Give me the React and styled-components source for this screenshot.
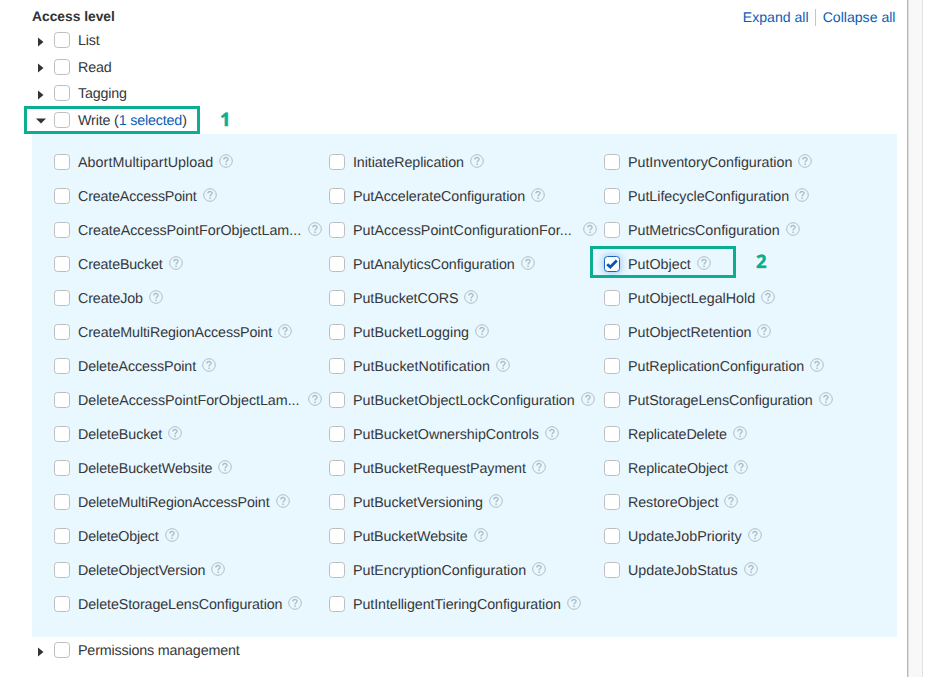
import React from "react";
import styled, { createGlobalStyle, css } from "styled-components";

const GlobalStyle = createGlobalStyle`
  * { box-sizing: border-box; }
  html, body { margin: 0; overflow: hidden; background: #fff; }
  body {
    font-family: "Liberation Sans", Arial, sans-serif;
    font-size: 14.3px;
    line-height: 20px;
    color: #36383a;
    text-rendering: geometricPrecision;
  }
`;

const Page = styled.div`
  display: flex;
  width: 931px;
  height: 677px;
  overflow: hidden;
`;

const Content = styled.main`
  width: 907px;
  padding: 6px 10px 0 32px;
`;

const Gutter = styled.div`
  width: 16px;
  background: #f8f8f8;
  border-left: 1px solid #b8b8b8;
  border-right: 1px solid #e3e3e3;
  box-shadow: inset 1px 0 0 #dedede;
`;

const Header = styled.header`
  display: flex;
  justify-content: space-between;
  height: 21px;
`;

const Title = styled.h1`
  margin: 0;
  font-size: 13.8px;
  line-height: 21px;
  font-weight: bold;
  color: #333;
`;

const Actions = styled.nav`
  display: flex;
  align-items: center;
  margin: 0 1.5px 0 0;
  height: 22px;
`;

const Link = styled.a`
  color: #0a5db5;
  font-size: 14.1px;
`;

const Divider = styled.span`
  width: 1px;
  height: 17px;
  margin: 0 7px 0 6px;
  background: #c4c4c4;
`;

const Level = styled.div`
  position: relative;
  display: flex;
  align-items: center;
  height: 26.6px;
`;

const LevelName = styled.span`
  padding-top: 2px;
  letter-spacing: -0.17px;
`;

const Arrow = styled.svg`
  width: 10px;
  height: 10px;
  margin: ${(p) => (p.$open ? "2px" : "3px")} 8px 0 4px;
  fill: #333;
`;

const Check = styled.span`
  display: flex;
  flex: none;
  align-items: center;
  justify-content: center;
  width: 16px;
  height: 16px;
  margin-right: 8px;
  background: #fff;
  border: 1px solid #bcbec0;
  border-radius: 3.5px;
  ${(p) => p.$checked && css`
    border-color: #1466c0;
    box-shadow: 0 0 7px 1px #9bcbf5;
  `}
`;

const Selected = styled.span`
  color: #0a5db5;
`;

const Panel = styled.div`
  display: grid;
  grid-template-columns: repeat(3, 275px);
  width: 865px;
  height: 503px;
  margin-top: 0.6px;
  padding: 11px 0 16px 22px;
  background: #e9f7ff;
`;

const Item = styled.div`
  position: relative;
  display: flex;
  align-items: center;
  height: 34px;
`;

const Name = styled.span`
  padding-top: 2px;
  white-space: nowrap;
  letter-spacing: ${(p) => p.$tracking}px;
  width: ${(p) => (p.$clipped ? "224px" : "auto")};
`;

const HelpIcon = styled.svg`
  flex: none;
  width: 14px;
  height: 14px;
  margin: -2px 0 0 6px;
`;

const Highlight = styled.span`
  position: absolute;
  border: 3px solid #0bae93;
  pointer-events: none;
  ${(p) => p.$level
    ? css`left: -8px; top: -0.8px; width: 176px; height: 28px; z-index: 1;`
    : css`left: -14px; top: -1px; width: 146px; height: 32px;`}
`;

const Marker = styled.strong`
  position: absolute;
  left: ${(p) => p.$left}px;
  top: ${(p) => p.$top}px;
  font: bold 18.5px/24px "Noto Sans", sans-serif;
  color: #0bae93;
  text-shadow: 1px 0 #fff, -1px 0 #fff, 0 1px #fff, 0 -1px #fff, 1px 1px #fff, -1px -1px #fff, 1px -1px #fff, -1px 1px #fff;
  -webkit-text-stroke: 0.5px #0bae93;
`;

// Each entry is an action name and its width adjustment in pixels.
const columns = [
  [["AbortMultipartUpload", 1], ["CreateAccessPoint", -3], ["CreateAccessPointForObjectLam...", -1], ["CreateBucket", -2], ["CreateJob", -1], ["CreateMultiRegionAccessPoint", -3], ["DeleteAccessPoint", -2], ["DeleteAccessPointForObjectLam...", -1], ["DeleteBucket", -1], ["DeleteBucketWebsite", -2], ["DeleteMultiRegionAccessPoint", -4], ["DeleteObject", -2], ["DeleteObjectVersion", -3], ["DeleteStorageLensConfiguration", -3]],
  [["InitiateReplication", -2], ["PutAccelerateConfiguration", -2], ["PutAccessPointConfigurationFor...", 1], ["PutAnalyticsConfiguration", -2], ["PutBucketCORS", -1], ["PutBucketLogging", 0], ["PutBucketNotification", 1], ["PutBucketObjectLockConfiguration", 0], ["PutBucketOwnershipControls", -1], ["PutBucketRequestPayment", -2], ["PutBucketVersioning", -2], ["PutBucketWebsite", -2], ["PutEncryptionConfiguration", -1], ["PutIntelligentTieringConfiguration", -3]],
  [["PutInventoryConfiguration", -1], ["PutLifecycleConfiguration", -1], ["PutMetricsConfiguration", -1], ["PutObject", 0], ["PutObjectLegalHold", 0], ["PutObjectRetention", -0.5], ["PutReplicationConfiguration", -1], ["PutStorageLensConfiguration", -3], ["ReplicateDelete", -2], ["ReplicateObject", -1], ["RestoreObject", -1], ["UpdateJobPriority", 0], ["UpdateJobStatus", 0]],
];

function Help() {
  return (
    <HelpIcon viewBox="0 0 14 14" fill="none" stroke="#aebcc5">
      <circle cx="7" cy="7" r="6.3" strokeWidth="1" />
      <path d="M4.9 5.5C4.9 2.9 9.1 3 9.1 5.3C9.1 6.8 7.1 6.8 7.1 8.4" strokeWidth="1.4" />
      <path d="M7.1 9.5V11" strokeWidth="1.5" />
    </HelpIcon>
  );
}

function AccessLevel({ name, open, children }) {
  return (
    <Level>
      <Arrow viewBox="0 0 10 10" $open={open}>
        <path d={open ? "M0 2.5H10L5 7.5Z" : "M2 0.5L7.5 5L2 9.5Z"} />
      </Arrow>
      <Check />
      <LevelName>{name}</LevelName>
      {children}
    </Level>
  );
}

function Permission({ name, adjust }) {
  const checked = name === "PutObject";
  return (
    <Item>
      <Check $checked={checked}>
        {checked && (
          <svg width="12" height="10" viewBox="0 0 12 10" fill="none">
            <path d="M1.2 5.2L4.3 8L10.8 1.6" stroke="#0a55b0" strokeWidth="2.8" />
          </svg>
        )}
      </Check>
      <Name $clipped={name.endsWith("...")} $tracking={adjust / name.length}>{name}</Name>
      <Help />
      {checked && <><Highlight /><Marker $left={152} $top={3}>2</Marker></>}
    </Item>
  );
}

export default function App() {
  return (
    <>
      <GlobalStyle />
      <Page>
        <Content>
          <Header>
            <Title>Access level</Title>
            <Actions><Link>Expand all</Link><Divider /><Link>Collapse all</Link></Actions>
          </Header>
          <section>
            <AccessLevel name="List" />
            <AccessLevel name="Read" />
            <AccessLevel name="Tagging" />
            <AccessLevel name={<>Write (<Selected>1 selected</Selected>)</>} open>
              <Highlight $level />
              <Marker $left={188} $top={1}>1</Marker>
            </AccessLevel>
            <Panel>
              {columns.map((items) => (
                <div key={items[0][0]}>
                  {items.map(([name, adjust]) => <Permission key={name} name={name} adjust={adjust} />)}
                </div>
              ))}
            </Panel>
            <AccessLevel name="Permissions management" />
          </section>
        </Content>
        <Gutter />
      </Page>
    </>
  );
}
